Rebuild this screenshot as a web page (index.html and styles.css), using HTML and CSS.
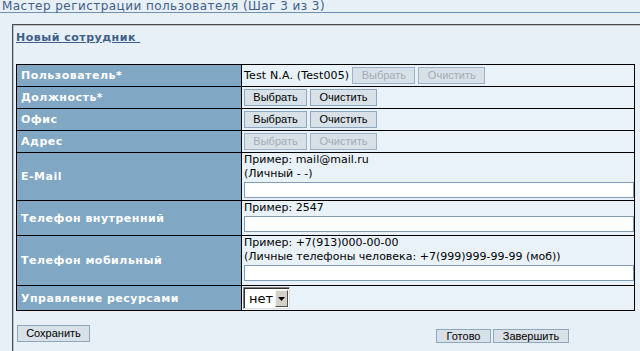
FILE: index.html
```html
<!DOCTYPE html>
<html lang="ru">
<head>
<meta charset="utf-8">
<title>Мастер регистрации пользователя</title>
<link rel="stylesheet" href="styles.css">
</head>
<body>
<div class="hdr">Мастер регистрации пользователя (Шаг 3 из 3)</div>
<div class="box">
  <div class="sub"><span>Новый сотрудник&nbsp;</span></div>
  <table class="form">
    <colgroup><col class="c-label"><col class="c-value"></colgroup>
    <tr class="r1">
      <th>Пользователь*</th>
      <td><div class="ctl"><span class="val">Test N.A. (Test005)</span><button class="btn w1" disabled>Выбрать</button><button class="btn w2" disabled>Очистить</button></div></td>
    </tr>
    <tr class="r1">
      <th>Должность*</th>
      <td><div class="ctl"><button class="btn w1">Выбрать</button><button class="btn w2">Очистить</button></div></td>
    </tr>
    <tr class="r1">
      <th>Офис</th>
      <td><div class="ctl"><button class="btn w1">Выбрать</button><button class="btn w2">Очистить</button></div></td>
    </tr>
    <tr class="r1">
      <th>Адрес</th>
      <td><div class="ctl"><button class="btn w1" disabled>Выбрать</button><button class="btn w2" disabled>Очистить</button></div></td>
    </tr>
    <tr class="r-mail">
      <th>E-Mail</th>
      <td class="multi"><div class="ln">Пример: mail@mail.ru</div><div class="ln">(Личный - -)</div><input class="inp" type="text"></td>
    </tr>
    <tr class="r-int">
      <th>Телефон внутренний</th>
      <td class="multi"><div class="ln">Пример: 2547</div><input class="inp" type="text"></td>
    </tr>
    <tr class="r-mob">
      <th>Телефон мобильный</th>
      <td class="multi"><div class="ln">Пример: +7(913)000-00-00</div><div class="ln">(Личные телефоны человека: +7(999)999-99-99 (моб))</div><input class="inp" type="text"></td>
    </tr>
    <tr class="r-res">
      <th>Управление ресурсами</th>
      <td><div class="sel"><span class="sel-text">нет</span><span class="sel-btn"><svg width="7" height="4" viewBox="0 0 7 4"><path d="M0 0H7L3.5 4Z" fill="#000"/></svg></span></div></td>
    </tr>
  </table>
  <div class="actions">
    <button class="btn save">Сохранить</button>
    <div class="right">
      <button class="btn ready">Готово</button>
      <button class="btn finish">Завершить</button>
    </div>
  </div>
</div>
</body>
</html>
```
FILE: styles.css
```css
html, body {
  margin: 0;
  padding: 0;
}
body {
  background: #e7eff7;
  font-family: "DejaVu Sans", Verdana, sans-serif;
  overflow: hidden;
  width: 640px;
  height: 351px;
}
.hdr {
  font-size: 12px;
  line-height: 12px;
  height: 12px;
  color: #3f5f86;
  padding-left: 2px;
  border-bottom: 1px solid #7090b2;
  letter-spacing: 0.45px;
  white-space: nowrap;
}
.box {
  margin: 11px 0 0 12px;
  width: 628px;
  height: 327px;
  border-top: 1px solid #4a4a4a;
  border-left: 1px solid #4a4a4a;
  box-shadow: inset 1px 1px 0 #b8c0c8;
  padding: 6px 0 0 3px;
  box-sizing: border-box;
}
.sub {
  font-size: 11px;
  font-weight: bold;
  color: #3f5f86;
  line-height: 14px;
  letter-spacing: 0.5px;
}
.sub span {
  text-decoration: underline;
}
.form {
  margin-top: 19px;
  border-collapse: collapse;
  width: 619px;
  table-layout: fixed;
}
.c-label { width: 225px; }
.form th {
  background: #80a7c4;
  color: #fff;
  font-size: 11px;
  font-weight: bold;
  text-align: left;
  padding: 0 0 0 4px;
  letter-spacing: 0.5px;
  vertical-align: middle;
  border: 1px solid #000;
  white-space: nowrap;
}
.form td {
  background: #e9f1f9;
  font-size: 11px;
  color: #000;
  padding: 0 0 0 2px;
  border: 1px solid #000;
  vertical-align: middle;
}
.r1 th, .r1 td { height: 21px; }
.r-mail th, .r-mail td { height: 47px; }
.r-int th, .r-int td { height: 34px; }
.r-mob th, .r-mob td { height: 49px; }
.r-res th, .r-res td { height: 24px; }
.form td.multi {
  vertical-align: top;
}
.ln {
  line-height: 14px;
  white-space: nowrap;
}
.inp {
  display: block;
  width: 100%;
  height: 16px;
  margin: 1px 0 0 0;
  border: 1px solid #7f9db9;
  background: #fff;
  box-sizing: border-box;
  padding: 0;
}
.ctl {
  display: flex;
  align-items: center;
  gap: 3px;
}
.val {
  margin-right: 0;
  letter-spacing: 0.15px;
  white-space: nowrap;
}
.btn {
  font-family: "Liberation Sans", Arial, sans-serif;
  font-size: 11px;
  height: 17px;
  line-height: 15px;
  padding: 0;
  background: #d8e0e8;
  border: 1px solid #8ea7bf;
  color: #000;
  box-sizing: border-box;
  text-align: center;
  cursor: default;
}
.btn:disabled {
  color: #a3acb5;
  border-color: #9db2c6;
}
.w1 { width: 63px; }
.w2 { width: 67px; }
.sel {
  display: flex;
  align-items: stretch;
  width: 47px;
  height: 22px;
  margin-left: -1px;
  box-sizing: border-box;
  background: #fff;
  border: 1px solid;
  border-color: #808080 #e0e0e0 #e0e0e0 #808080;
  box-shadow: inset 1px 1px 0 #303030;
  padding: 2px 1px 1px 2px;
}
.sel-text {
  flex: 1;
  font-size: 13px;
  line-height: 17px;
  padding-left: 3px;
  color: #000;
}
.sel-btn {
  width: 13px;
  background: #d4d0c8;
  border: 1px solid;
  border-color: #f4f4f4 #505050 #505050 #f4f4f4;
  box-sizing: border-box;
  display: flex;
  align-items: center;
  justify-content: center;
}
.actions {
  display: flex;
  align-items: flex-start;
  margin-top: 14px;
  padding-left: 1px;
}
.save {
  width: 73px;
  height: 17px;
}
.right {
  display: flex;
  gap: 2px;
  margin-left: 346px;
  margin-top: 4px;
}
.ready { width: 55px; height: 14px; line-height: 12px; }
.finish { width: 76px; height: 14px; line-height: 12px; }
```
